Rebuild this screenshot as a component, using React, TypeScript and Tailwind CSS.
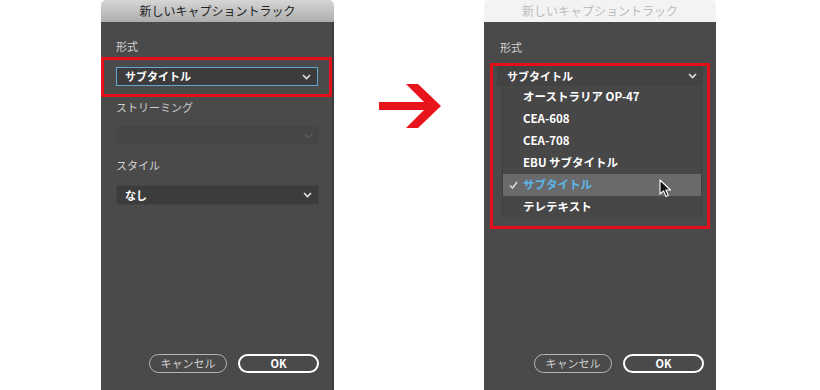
const Chevron = ({ className }: { className: string }) => (
  <svg width="9" height="6" viewBox="0 0 9 6" className={className}>
    <path d="M1 1l3.5 3.5L8 1" fill="none" stroke="currentColor" strokeWidth="1.6" />
  </svg>
);

const Buttons = () => (
  <div className="mt-auto flex justify-end gap-[11px] pb-[17px]">
    <div className="flex h-[19px] w-[78px] items-center justify-center rounded-full border-[1.5px] border-[#b4b4b4] text-[11px] text-[#d0d0d0]">
      キャンセル
    </div>
    <div className="flex h-[19px] w-[81px] items-center justify-center rounded-full border-2 border-white text-[11px] font-bold text-white">
      OK
    </div>
  </div>
);

const menuItems = ["オーストラリア OP-47", "CEA-608", "CEA-708", "EBU サブタイトル", "サブタイトル", "テレテキスト"];

export default function App() {
  return (
    <div className="flex h-[390px] w-[820px] bg-white font-['Noto_Sans_CJK_JP',sans-serif]">
      {/* before */}
      <div className="ml-[101px] flex h-full w-[233px] flex-col">
        <div className="flex h-[22px] items-center justify-center rounded-t-[5px] bg-gradient-to-b from-[#d6d6d6] to-[#adadad] text-[12px] text-[#222]">
          新しいキャプショントラック
        </div>
        <div className="flex flex-1 flex-col border-r-2 border-[#3a3a3a] bg-[#4a4a4a] pl-[15px] pr-[13px]">
          <div className="pt-[17px] text-[11px] leading-[14px] text-[#d4d4d4]">形式</div>
          <div className="-ml-[15px] -mr-[13px] mt-[4px] border-[3px] border-[#e3101a] pb-[8px] pl-[12px] pr-[11px] pt-[7px]">
            <div className="flex h-[19px] items-center justify-between border border-[#62a8d2] bg-[#3c3c3c] pl-[8px] pr-[6px] text-[11px] font-bold text-white">
              サブタイトル
              <Chevron className="text-[#e0e0e0]" />
            </div>
          </div>
          <div className="mt-[3px] text-[11px] leading-[14px] text-[#cfcfcf]">ストリーミング</div>
          <div className="mt-[12px] flex h-[19px] items-center justify-end bg-[#464646] pr-[6px]">
            <Chevron className="text-[#5a5a5a]" />
          </div>
          <div className="mt-[13px] text-[11px] leading-[14px] text-[#d4d4d4]">スタイル</div>
          <div className="mt-[13px] flex h-[20px] items-center justify-between border border-[#444] bg-[#3c3c3c] pl-[8px] pr-[6px] text-[11px] font-bold text-white">
            なし
            <Chevron className="text-[#e0e0e0]" />
          </div>
          <Buttons />
        </div>
      </div>

      {/* arrow */}
      <div className="w-[150px] pl-[45px] pt-[84px]">
        <svg width="62" height="44" viewBox="0 0 62 44">
          <polygon points="27,0 39,0 62,22 39,44 27,44 45,26 0,26 0,18 45,18" fill="#e8141b" />
        </svg>
      </div>

      {/* after */}
      <div className="flex h-full w-[232px] flex-col">
        <div className="flex h-[22px] items-center justify-center rounded-t-[5px] bg-[#f3f3f3] text-[12px] text-[#bcbcbc]">
          新しいキャプショントラック
        </div>
        <div className="flex flex-1 flex-col bg-[#4a4a4a] pl-[16px] pr-[12px]">
          <div className="pt-[18px] text-[11px] leading-[14px] text-[#d4d4d4]">形式</div>
          <div className="-ml-[10px] -mr-[6px] mt-[9px] border-[3px] border-[#e3101a] pb-[8px]">
            <div className="mx-[4px] flex h-[20px] items-center justify-between bg-[#434343] pl-[10px] pr-[6px] text-[11px] font-bold text-white">
              サブタイトル
              <Chevron className="text-[#e0e0e0]" />
            </div>
            <div className="ml-[9px] mr-[5px] border-x border-[#3e3e3e] bg-[#474747]">
              {menuItems.map((item) => {
                const selected = item === "サブタイトル";
                return (
                  <div
                    key={item}
                    className={`relative flex h-[22px] items-center text-[11.5px] font-bold ${
                      selected ? "bg-[#6a6a6a] text-[#5ab8ea]" : "text-white"
                    }`}
                  >
                    <div className="flex w-[20px] justify-center">
                      {selected && (
                        <svg width="9" height="8" viewBox="0 0 9 8">
                          <path d="M1 4.5l2.5 2.5L8 1" fill="none" stroke="#e0e0e0" strokeWidth="1.4" />
                        </svg>
                      )}
                    </div>
                    {item}
                    {selected && (
                      <svg width="13" height="19" viewBox="0 0 13 19" className="absolute left-[156px] top-[5px]">
                        <path
                          d="M1 1L1 15L4.5 11.8L7 17.5L9.3 16.5L6.8 11L11.5 11Z"
                          fill="#111"
                          stroke="#fff"
                          strokeWidth="1.1"
                          strokeLinejoin="round"
                        />
                      </svg>
                    )}
                  </div>
                );
              })}
            </div>
          </div>
          <Buttons />
        </div>
      </div>
    </div>
  );
}
